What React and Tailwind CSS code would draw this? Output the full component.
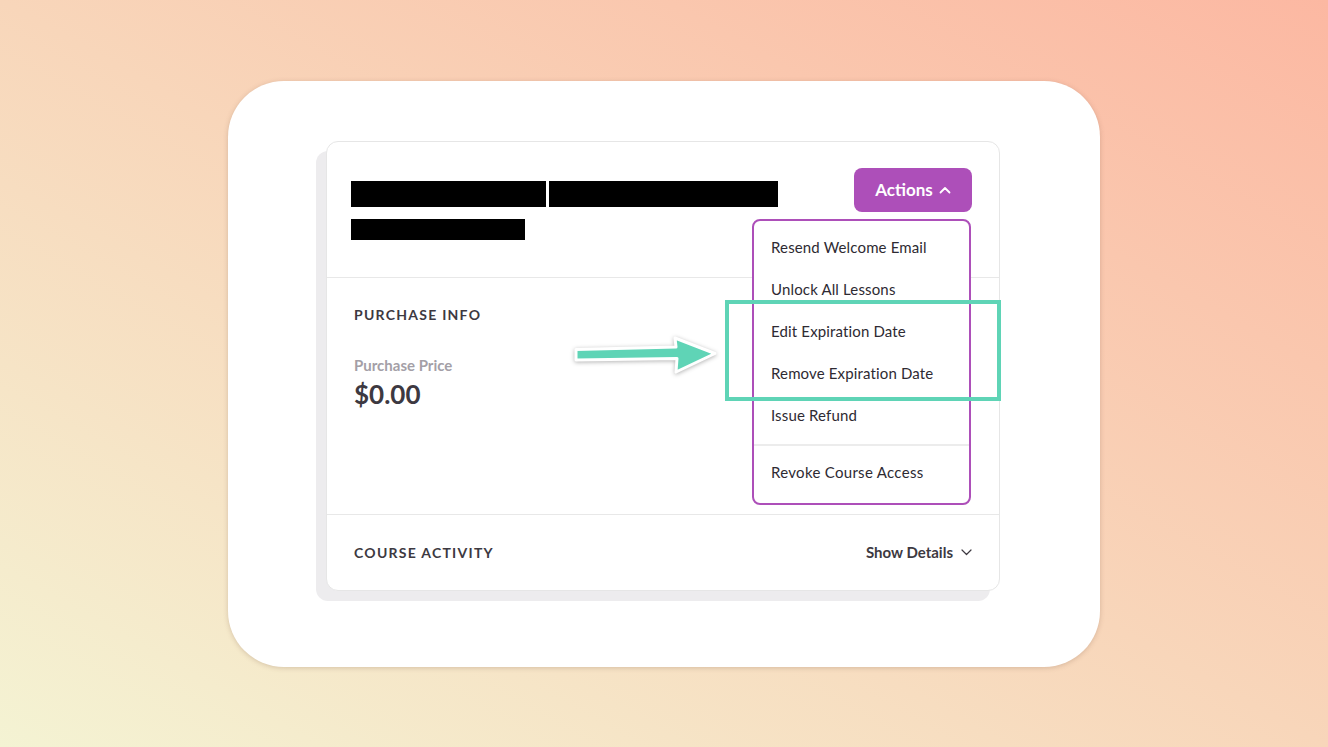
import React from 'react';

const items = [
    "Resend Welcome Email",
    "Unlock All Lessons",
    "Edit Expiration Date",
    "Remove Expiration Date",
    "Issue Refund",
];

const App = () => {
    return (
        <div
            className="w-full h-[747px] flex items-center justify-center bg-[linear-gradient(to_top_right,#f4f3d3,#f8d6ba_50%,#fcb8a2)] font-['Lato',sans-serif]">
            <div
                className="relative w-[872px] h-[586px] rounded-[56px] bg-white shadow-[0_1px_5px_rgba(120,80,60,0.25)] pt-[60px] pl-[98px]">
                <div
                    className="relative w-[674px] h-[450px] bg-white border border-[#e6e6e6] rounded-[12px] shadow-[-10px_10px_0_0_#edecee]">
                    {/* header */}
                    <div className="h-[136px] flex justify-between items-start border-b border-[#e8e8e8] pl-[24px] pr-[27px] pt-[26px]">
                        <div className="pt-[13px]">
                            <div className="flex gap-[3px]">
                                <div className="w-[195px] h-[26px] bg-black"></div>
                                <div className="w-[229px] h-[26px] bg-black"></div>
                            </div>
                            <div className="w-[174px] h-[21px] bg-black mt-[12px]"></div>
                        </div>
                        <button
                            className="h-[44px] w-[118px] rounded-[8px] bg-[#ad4fb9] text-white text-[17px] font-bold flex items-center justify-center gap-[6px]">
                            Actions
                            <svg width="12" height="8" viewBox="0 0 12 8" fill="none">
                                <path d="M1.5 6.5L6 2L10.5 6.5" stroke="white" strokeWidth="1.8" strokeLinecap="round"
                                      strokeLinejoin="round"/>
                            </svg>
                        </button>
                    </div>

                    {/* purchase info */}
                    <div className="h-[237px] border-b border-[#e8e8e8] px-[27px] pt-[27px]">
                        <h3 className="text-[14px] font-bold tracking-[0.09em] text-[#3d3941] leading-[20px]">PURCHASE INFO</h3>
                        <p className="mt-[30px] text-[15px] font-bold text-[#a49fa7] leading-[20px]">Purchase Price</p>
                        <p className="mt-[3px] text-[26px] font-bold text-[#3d3941] leading-[32px]">$0.00</p>
                    </div>

                    {/* course activity */}
                    <div className="h-[75px] flex items-center justify-between px-[27px]">
                        <h3 className="text-[14px] font-bold tracking-[0.09em] text-[#3d3941]">COURSE ACTIVITY</h3>
                        <div className="flex items-center gap-[8px] text-[15px] font-bold text-[#3d3941]">
                            Show Details
                            <svg width="11" height="7" viewBox="0 0 11 7" fill="none">
                                <path d="M1 1L5.5 5.5L10 1" stroke="#3d3941" strokeWidth="1.2" strokeLinecap="round"
                                      strokeLinejoin="round"/>
                            </svg>
                        </div>
                    </div>

                    {/* dropdown */}
                    <div
                        className="absolute top-[77px] right-[28px] w-[219px] bg-white border-2 border-[#ad4fb9] rounded-[8px] pt-[6px] pb-[9px]">
                        {items.map((t) => (
                            <div key={t} className="h-[42px] flex items-center px-[17px] text-[15px] tracking-[0.01em] text-[#2e2a32]">
                                {t}
                            </div>
                        ))}
                        <div className="h-[2px] bg-[#ececec] mt-[7px] mb-[6px]"></div>
                        <div className="h-[42px] flex items-center px-[17px] text-[15px] tracking-[0.02em] text-[#2e2a32]">
                            Revoke Course Access
                        </div>
                    </div>

                    {/* highlight */}
                    <div
                        className="absolute left-[398px] top-[158px] w-[276px] h-[101px] border-[4px] border-[#5fd4b6]"></div>
                </div>

                {/* arrow */}
                <svg className="absolute left-[337px] top-[249px] drop-shadow-[0_1px_2px_rgba(0,0,0,0.3)]" width="160"
                     height="50" viewBox="0 0 160 50" fill="none">
                    <path d="M11 19.5L111 17L110 8L150 23.5L111 42L112 28.5L11 30Z" fill="#5fd4b6" stroke="white"
                          strokeWidth="3" strokeLinejoin="round"/>
                </svg>
            </div>
        </div>
    );
};

export default App;
